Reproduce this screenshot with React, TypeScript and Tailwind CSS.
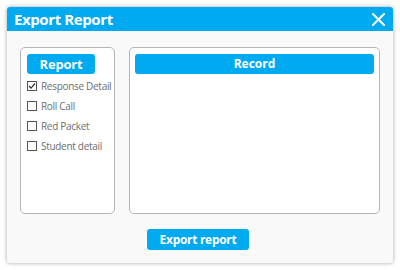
import React from "react";

const items = [
  { label: "Response Detail", checked: true },
  { label: "Roll Call", checked: false },
  { label: "Red Packet", checked: false },
  { label: "Student detail", checked: false },
];

export default function App() {
  return (
    <div
      className="w-[400px] h-[270px] bg-white pt-[7px] pl-[7px]"
      style={{ fontFamily: '"Open Sans", "Noto Sans", sans-serif' }}
    >
      <div className="w-[386px] h-[256px] bg-[#f9f9f9] rounded-[3px] shadow-[0_0_4px_rgba(0,0,0,0.35)] flex flex-col overflow-hidden">
        <div className="h-[24px] bg-[#00aaf0] flex items-center justify-between pl-[7px] pr-[8px]">
          <span className="text-white font-bold text-[15px] tracking-[-0.4px] leading-none">Export Report</span>
          <svg width="13" height="13" viewBox="0 0 13 13">
            <path d="M1 1 L12 12 M12 1 L1 12" stroke="white" strokeWidth="2" strokeLinecap="square" />
          </svg>
        </div>
        <div className="flex gap-[14px] pl-[13px] pt-[16px]">
          <div className="w-[95px] h-[167px] bg-white border border-[#b5b5b5] rounded-[5px] pt-[6px] pl-[6px]">
            <div className="w-[68px] h-[20px] bg-[#00aaf0] rounded-[3px] flex items-center justify-center text-white font-bold text-[13px] tracking-[-0.2px] leading-none">
              Report
            </div>
            <div className="flex flex-col gap-[8px] mt-[6px]">
              {items.map((it) => (
                <div key={it.label} className="flex items-center gap-[4px] h-[12px] whitespace-nowrap">
                  <div className="w-[10px] h-[10px] shrink-0 border border-[#555] bg-white flex items-center justify-center">
                    {it.checked && (
                      <svg width="8" height="8" viewBox="0 0 8 8">
                        <path d="M1 4 L3 6.2 L7 1.5" stroke="#333" strokeWidth="1.2" fill="none" />
                      </svg>
                    )}
                  </div>
                  <span className="text-[10px] text-[#6e6e6e] tracking-[-0.3px] leading-none">{it.label}</span>
                </div>
              ))}
            </div>
          </div>
          <div className="w-[251px] h-[167px] bg-white border border-[#b5b5b5] rounded-[5px] pt-[6px] px-[5px]">
            <div className="h-[20px] bg-[#00aaf0] rounded-[3px] flex items-center justify-center text-white font-bold text-[12px] leading-none">
              Record
            </div>
          </div>
        </div>
        <div className="flex justify-center pt-[15px] pr-[4px]">
          <div className="w-[102px] h-[21px] bg-[#00aaf0] rounded-[3px] flex items-center justify-center text-white font-bold text-[12px] tracking-[-0.3px] leading-none">
            Export report
          </div>
        </div>
      </div>
    </div>
  );
}
